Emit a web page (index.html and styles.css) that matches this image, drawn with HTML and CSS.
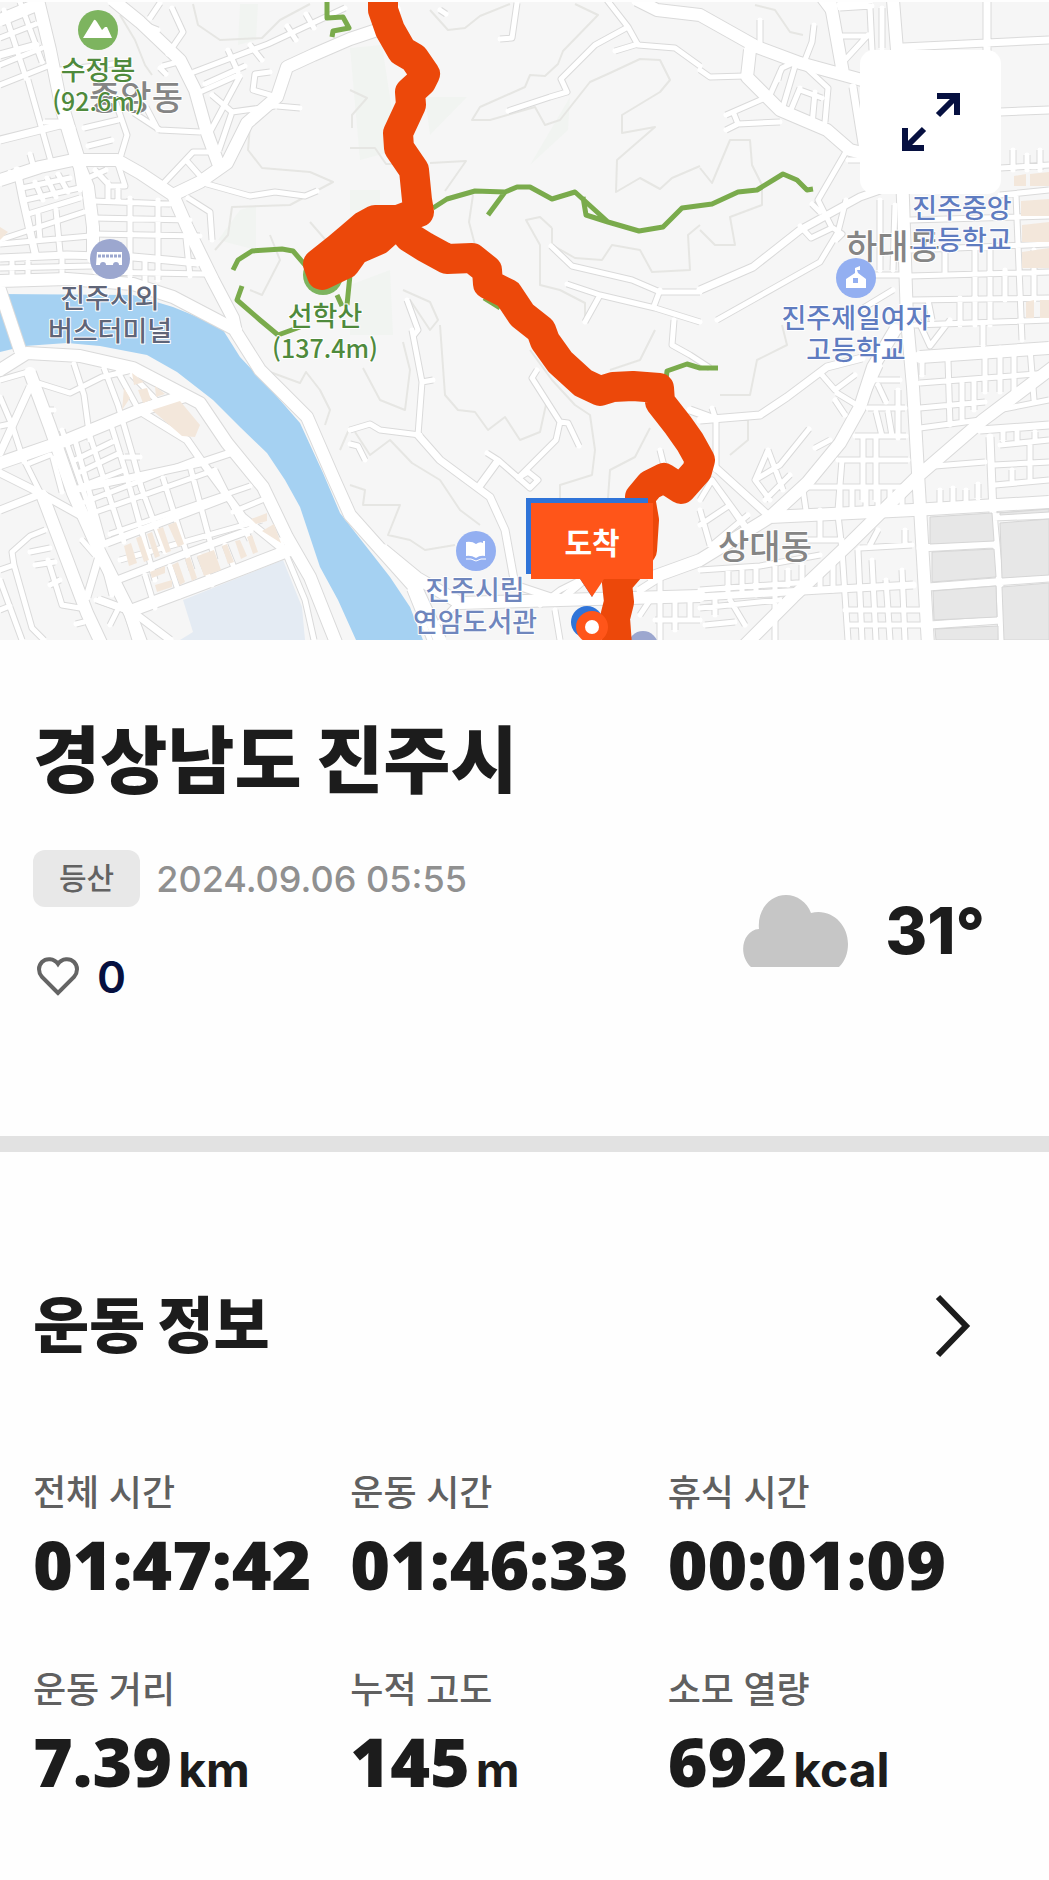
FILE: index.html
```html
<!DOCTYPE html>
<html lang="ko">
<head>
<meta charset="utf-8">
<meta name="viewport" content="width=device-width, initial-scale=1">
<title>경상남도 진주시</title>
<link rel="stylesheet" href="styles.css">
</head>
<body>
<main class="page">
  <section class="map" aria-label="등산 경로 지도">
    <svg class="map-canvas" viewBox="0 2 1049 638" role="img" aria-label="진주시 지도">
      <defs>
        <g id="minor">
          <path d="M0 38L36 24M0 85L48 66M4 10L26 78M20 2L42 62M0 65L42 48M28 80L52 165M45 122H66M68 112L82 158M60 70L130 62M84 128L118 120M88 146L112 140M115 100L127 135L121 155M30 154L34 168M10 172V180"/>
          <path d="M150 18L160 3M143 24L158 30M172 8L183 32L168 54M163 66L178 62M160 68L166 74"/>
          <path d="M194 72L268 44L345 8M205 84L245 66M228 50L238 72M250 45L262 60M287 26L296 40M306 14L314 28M200 92L236 76M270 72L255 74L253 90L277 97M211 130L240 76M212 95L232 112L275 106M232 112L219 150M277 106L300 108"/>
          <path d="M162 185L193 152L212 152M186 160L202 178M134 113L160 130L200 132M146 107L158 130M207 184L250 196L275 192L305 196L317 191M188 198L210 212L212 240"/>
          <path d="M22 188L70 178M25 200L84 187M28 214L80 198M0 240L84 212M35 182L43 200M47 178L56 197M58 174L68 192M76 165L80 190M95 170L110 186H125L118 164M108 182V200M88 178L106 170"/>
          <path d="M93 201L170 204M94 218L190 220M94 234L200 236M0 244L90 236M0 268L92 266M95 272L205 274M130 198V276M158 200V280M38 214L40 240M56 210L60 252M12 262V278M28 262V278M62 260V280M186 238L190 276M145 258V282M118 190V200"/>
          <path d="M0 380L28 372M0 397L12 425L24 462M38 383L70 393L102 377L128 371M74 364L84 395L90 440M104 368L118 405L134 460L142 490M118 372L136 405M132 375L160 404M48 410H54M0 426L10 424"/>
          <path d="M62 430L90 510L112 595M75 440L104 545M90 436L124 542M112 428L125 470L155 580M30 463L50 455M20 452L40 492M53 458L62 492M75 460L112 442M78 473L120 453M82 486L124 470M85 502L200 458M90 514L215 470M110 534L250 486M120 560L262 520M140 484L165 552M163 478L192 570M190 466L215 560M215 470L250 540M233 512L262 500M120 590L135 640M145 575L155 608M170 566L180 596M200 556L212 585M225 545L235 570M140 457H125"/>
          <path d="M0 570L14 565L32 628L44 640M14 565L12 552L30 536L45 530M30 552L50 548M35 565L55 562M48 560L62 605L80 608M0 580L22 640M0 610L10 606M50 585L60 580M76 624L84 622M82 540L95 555M120 605L110 625M96 600L130 612M280 540L305 600L314 640"/>
          <path d="M440 10L446 14M517 3L512 38L500 39M607 0L628 27L638 45L675 48L700 66M628 27L595 45L561 79L567 92L550 97L508 111M615 51L638 44M551 246L572 266L632 280L660 292L700 292M567 284L600 295L655 308L700 322M600 295L585 322M660 290L654 306M407 300L418 330L414 335M674 320L672 345L690 355L710 368"/>
          <path d="M350 430L370 424L380 430L420 435M418 435L422 382L412 330M422 382L433 380M350 444L358 446L365 460M480 485L498 460L487 453M498 460L530 488L538 480L528 472L518 478L556 440L560 422L532 378L537 370M560 422L568 423L579 446M665 470L660 450"/>
          <path d="M700 70L710 77L745 76M726 115L765 98M726 130L738 124L780 122M738 124L734 114M770 95L782 68L795 62M780 72L778 80M795 66L782 110M800 62L828 88L825 122M800 88L790 112M815 92L812 125M800 90L822 98M760 48V20M805 60L812 42L814 25M820 0L835 20"/>
          <path d="M835 36H870M870 8L872 50M840 8L872 6M845 60L868 35M882 8V48M847 150L818 200L832 228L811 238L800 226M862 160H848M833 228L842 234L836 240M820 212L812 204M846 200L838 232L820 262L717 320M880 200V270M895 205L893 270M870 275H904M860 310L893 290"/>
          <path d="M1000 168L1049 165M1000 195L1049 190M910 220L1049 216M912 250L1049 244M910 276L1049 272M912 300L1049 298M915 325L1049 320M1013 150V170M1027 155V170M1040 150V170M1016 195L1022 340M945 250V275M975 250V325M990 250V325M1005 270V300M928 300L932 320M960 298V325M1034 250V300M918 320L930 346L950 320M983 325V345"/>
          <path d="M920 383L1049 373M920 408L985 402M920 428L980 420M922 375V360M948 360L950 425M962 382V420M974 382V410M985 350V392M1000 348V392M1014 348V392M1030 348L1034 400M998 410L1049 400M1000 445L1049 440M994 465L1049 462M995 485L1049 480M1030 445V480M1012 470V480M1003 432V440M1017 432V440M1035 432V440M935 466L985 462M940 502V490M953 502V488M966 502V490M978 498V484M998 516L1049 512"/>
          <path d="M870 380H900M868 408H905M855 436H906M838 460H908M808 487H910M880 366L868 392M878 385L886 402M876 412L882 436M888 412L892 436M898 390V438M863 436V500M876 436V500M842 460L838 510M840 490V510M852 490V510M866 490V510M878 490V510M890 490V510M902 490V510M803 490L806 510M820 510V540M838 515L842 550M808 540H842M860 548L912 545M870 545L878 530M905 545V530"/>
          <path d="M700 570L760 566L820 555M700 608L780 600M705 625L735 622M700 590L810 582M728 572V595M742 570V595M756 568V595M775 566V640M788 570V585M802 565V582M842 550L848 640M858 550L862 640M872 560L876 640M886 580L890 640M902 570L905 640M820 572V590M833 560V590M730 600L745 625M715 600V615M845 610H920M847 625H925M770 500L755 480L768 450M755 480L780 465L809 429M768 450L783 490M765 500L790 475M700 500L712 480L745 525M712 480L750 535M700 525L730 505M712 545L748 515M700 510L710 545M716 420V470M712 408L716 420M835 400L845 415M822 375L835 390L855 375M837 393L860 407M815 448L830 440"/>
          <path d="M555 610L560 640M640 615L650 600M660 580V640M675 595V630M690 595V620M655 620H700M540 605L560 590L580 580M410 590L430 640M455 606L440 622"/>
        </g>
        <g id="street">
          <path d="M17 170L23 200L35 253M0 258L67 255L133 257L167 260L197 263M30 387L0 453M0 473L40 493L83 517M0 510L43 493M100 553L87 597M117 580L187 553L250 530M107 543L160 523L225 498M73 490L200 463L230 453M143 413L187 440L203 463L243 517L280 547M100 600L133 612L170 640"/>
          <path d="M700 420L760 415L787 397L827 367L862 358M716 468L770 517M700 290L753 267L800 230L860 197L880 190M903 47L1049 40M987 0V50L990 110M1000 112L1049 110M700 597L820 590L913 585M920 548L993 544M928 587L1049 578M930 625L1000 620M990 437L993 513L1000 587L1002 640M993 517L1049 515M980 430L1049 425M853 87L863 150L880 190M870 0L840 5M640 590L662 576"/>
          <path d="M418 435L440 460L490 497L505 530L515 585L560 600M478 488L497 462M0 55L36 45M0 140L60 125L72 128M690 410L712 418M450 600L500 602L590 598M560 600L590 575"/>
        </g>
        <g id="avenue">
          <path d="M113 0L140 22L180 60L195 90L207 133L218 163M0 180L40 167L73 160L117 160L140 173L173 195M395 10L377 30L350 39L313 55L287 67L277 97L247 123L227 163L200 182L173 195L187 227L213 280L233 318L236 332L260 370L307 417L333 477L350 515L383 552L417 590L440 640M383 550L417 578L460 603L700 596"/>
          <path d="M0 20L34 6M38 0L50 50L62 110L77 160L88 187L93 227V258M0 281L67 279L133 284L173 297L236 330M0 290L20 350"/>
          <path d="M0 370L27 353L80 356L133 368L200 403L227 443L263 487L287 537L310 577L337 645M0 463L67 440L140 410L185 396M30 373L50 427L73 493L100 553L130 613L142 645M43 497L67 560L87 613L102 645M133 610L213 580L290 550"/>
          <path d="M637 0L657 10L700 15L757 47L800 63L862 80M750 50L747 77L780 110L827 130L850 150L870 155M830 0L843 73M653 577L700 560L770 517L807 483L840 443L860 407L873 367L895 330M770 517L913 510L1049 502M920 357L1049 348"/>
          <path class="trunk" d="M893 0L897 50L903 200L907 320L913 387L920 507L928 645M1060 362L983 420L917 477L850 543L793 597L745 645"/>
        </g>
      </defs>

      <rect class="land" y="0" width="1049" height="640"/>
      <path class="wood" d="M350 48L382 45L398 150L360 160ZM425 97H467L430 135ZM240 4H258L256 40L238 45ZM350 190H380V210H350ZM350 285L390 270L393 335H350ZM240 210L256 205V250L218 240ZM570 97L568 130L530 165Z"/>
      <path class="contour" d="M193 4L198 25L220 40L262 38L280 20L310 4M120 15L135 40L145 65L152 75M250 125L248 150L262 168L310 172L333 182L290 205L232 207L228 235L215 250M350 148H375L386 164H400M350 90L367 98L352 115V128M430 163L466 161L445 191M473 195L469 222L475 245M430 10L448 30L465 28L480 16L510 4M575 4L598 15L563 51L558 64L545 76L530 75L525 87L480 107L472 120H490L535 107L545 125L560 120L590 82L610 73L640 59L660 60L670 80L660 92L622 115V133L655 127L617 160L616 192L640 178L660 189L672 178L700 166M552 228L540 217L526 220L540 245V285L560 290L585 303V320M552 228V245L575 258L602 260L612 245L640 250L652 272L690 270L688 235L700 225"/>
      <path class="contour" d="M700 168L712 183L730 140L750 140L752 165L762 185V205L730 217L735 245L715 245L700 230M755 5L775 10L790 32L803 35M403 290L430 302L438 320L430 330L410 300M363 368L380 400L405 410L410 370L403 342M440 325L445 395L458 410L475 412L488 430L505 417L520 440L540 432L547 400M530 350L552 380L575 405L590 415L595 450L592 475L560 485V498M655 330L640 360L610 370M650 428L635 457L610 470L608 498M355 432L370 455L390 440L412 463L440 480L460 510L480 525M350 485L365 490L363 505L400 505L388 535L410 540L425 550L455 545M270 372L300 383L306 372L320 390L330 410L325 425M350 427L340 450M720 395L750 395L757 360L787 345L782 325M720 420H748V440L730 455M270 235L280 260L262 295L250 290M310 222L330 245"/>
      <path class="river" d="M0 294L133 295L173 307L200 318L223 330L240 357L273 392L300 423L323 473L340 513L390 577L410 607L423 640H356L338 600L320 567L300 507L285 480L267 453L240 427L213 400L177 372L147 355L100 346L67 343L25 346L0 352Z"/>
      <path class="water" d="M183 600L283 560L302 607L305 640H180L193 632Z"/>

      <use href="#minor" class="case case-minor"/>
      <use href="#street" class="case case-street"/>
      <use href="#avenue" class="case case-avenue"/>
      <use href="#minor" class="road road-minor"/>
      <use href="#street" class="road road-street"/>
      <use href="#avenue" class="road road-avenue"/>

      <path class="shop" d="M152 410L180 401L200 425L195 437L182 436ZM132 373L144 382L134 385ZM138 390L147 388L151 400L143 403ZM155 386L165 394L156 397ZM124 388L130 398L122 410ZM124 546L131 543L137 563L129 566ZM136 538L141 536L149 560L144 562ZM147 534L152 532L160 556L155 558ZM157 529L163 527L171 551L166 553ZM168 525L176 522L184 544L178 547ZM197 556L214 550L221 570L204 576ZM172 565L178 562L185 582L180 585ZM185 559L190 557L197 578L192 581ZM222 546L227 544L234 562L228 564ZM235 541L240 540L247 556L241 559ZM247 537L252 535L258 552L253 554ZM251 519L267 513V521L256 524ZM262 531L274 524L281 543ZM150 572L165 566V573L152 578ZM155 585L172 580V587L157 592ZM1021 201L1049 199V216H1021ZM1022 225L1049 222V242H1022ZM1022 252L1049 248V268H1022ZM1014 176L1026 174V186H1014ZM1030 174L1049 172V186H1030ZM1026 302L1034 300V318H1026ZM1040 300H1049V318H1040ZM0 227L8 232L0 240Z"/>
      <path class="works" d="M930 517L992 513L994 541L930 544ZM932 552L994 549L996 577L932 582ZM933 591L996 586L997 617L934 620ZM935 629L998 626V640H936ZM1000 523L1049 519V575L1002 578ZM1002 587L1049 583V640H1004ZM1000 513L1049 509V512L1000 515Z"/>

      <path class="trail" d="M327 0V18L343 17L349 28L333 31L332 37M233 270L238 260L252 251L282 249L293 251L306 266M242 286L237 300L260 320L278 335L300 327M350 275L347 305M337 295L342 306M433 208L447 199L475 191L505 192L517 187L530 187L552 199L575 192L608 222L639 231L663 227L682 208L712 204L738 192L757 190L783 174L797 180L807 190L813 189M505 192L488 215M583 197L586 215L608 222M484 298L500 308M666 380L667 371L687 364L700 368H718"/>
      <circle class="pin-peak" cx="323" cy="275" r="20"/>
      <circle class="pin-bus" cx="643" cy="646" r="15"/>

      <path class="route" d="M383 0V10L390 30L402 51L414 58L425 74L421 82L410 92L411 105L398 133L399 148L414 170L417 200L419 212L398 220L375 220L364 226L350 238L338 248L318 264L322 275L345 264L355 250L378 240L398 222L409 237L425 247L447 259L472 258L487 270L488 284L508 294L522 315L541 330L545 341L560 362L583 383L600 391L613 387L633 386L659 388L660 402L678 425L690 442L700 460L697 471L681 489L664 478L650 485L640 497L644 520L642 550L630 568L617 583L619 602L615 618L617 645"/>

      <path class="flag-shadow" d="M526 498H648V574H526ZM577 574L592 597L600 574Z"/>
      <circle class="flag-shadow" cx="587" cy="622" r="16"/>
      <path class="flag" d="M531 503H653V579H604L592 597L580 579H531Z"/>
      <circle class="flag" cx="592" cy="627" r="16"/>
      <circle class="glyph" cx="592" cy="627" r="7"/>
      <text class="flag-text" x="592" y="554">도착</text>

      <g class="label district">
        <text x="136" y="110">중앙동</text>
        <text x="893" y="259">하대동</text>
        <text x="765" y="559">상대동</text>
      </g>
      <g class="label peak">
        <text x="98" y="80">수정봉</text>
        <text class="height" x="98" y="111">(92.6m)</text>
        <text x="325" y="326">선학산</text>
        <text class="height" x="325" y="358">(137.4m)</text>
      </g>
      <g class="label terminal">
        <text x="110" y="308">진주시외</text>
        <text x="110" y="341">버스터미널</text>
      </g>
      <g class="label school">
        <text x="962" y="218">진주중앙</text>
        <text x="962" y="250">고등학교</text>
        <text x="856" y="328">진주제일여자</text>
        <text x="856" y="360">고등학교</text>
      </g>
      <g class="label library">
        <text x="475" y="600">진주시립</text>
        <text x="475" y="632">연암도서관</text>
      </g>

      <circle class="pin-peak" cx="98" cy="30" r="20"/>
      <path class="glyph" d="M83 38L94 20Q95 19 97 22L102 30L105 27H107L112 38Z"/>
      <circle class="pin-bus" cx="110" cy="259" r="20"/>
      <path class="glyph" d="M97 252H122V265H119A3 3 0 0 0 113 265H106A3 3 0 0 0 100 265H96Z"/>
      <path class="bus-windows" d="M98 256H121"/>
      <circle class="pin-place" cx="856" cy="278" r="20"/>
      <path class="glyph" d="M855 268L860 266V270L857 270L858 273L866 279V288H846V279L855 273Z"/>
      <rect class="pin-place" x="853" y="278" width="5" height="5"/>
      <circle class="pin-place" cx="476" cy="551" r="20"/>
      <path class="glyph" d="M466 542Q472 541 476 544Q480 541 483 543V541H485V556Q480 555 476 558Q471 555 466 556Z"/>
      <path class="book-edge" d="M466 559Q471 558 476 561Q481 558 486 559"/>
    </svg>
    <button class="expand" type="button" aria-label="지도 확대">
      <svg viewBox="0 0 58 58" width="58" height="58" aria-hidden="true">
        <path d="M35 3H55V22M55 3L36 22M3 35V55H22M3 55L22 36"/>
      </svg>
    </button>
  </section>

  <section class="summary">
    <h1>경상남도 진주시</h1>
    <div class="summary-row">
      <div class="meta">
        <div class="meta-line">
          <span class="chip">등산</span>
          <time datetime="2024-09-06T05:55">2024.09.06 05:55</time>
        </div>
        <button class="like" type="button" aria-label="좋아요 0">
          <svg viewBox="0 0 42 40" width="42" height="40" aria-hidden="true">
            <path d="M21 36L5 20C1 15 1 9 5 5C9 1 17 1 21 7C25 1 33 1 37 5C41 9 41 15 37 20Z"/>
          </svg>
          <span>0</span>
        </button>
      </div>
      <div class="weather">
        <svg viewBox="0 0 106 72" width="106" height="72" role="img" aria-label="흐림">
          <path d="M8 72C-6 59 0 35 16 34C14 15 27 0 43 0C54 0 64 7 68 18C88 13 105 29 105 49C105 58 102 66 96 72Z"/>
        </svg>
        <strong>31°</strong>
      </div>
    </div>
  </section>

  <section class="workout">
    <header class="workout-head">
      <h2>운동 정보</h2>
      <a href="#stats" aria-label="운동 정보 자세히 보기">
        <svg viewBox="0 0 36 64" width="36" height="64" aria-hidden="true">
          <path d="M3 3L31 32L3 61"/>
        </svg>
      </a>
    </header>
    <dl class="stats" id="stats">
      <div><dt>전체 시간</dt><dd>01:47:42</dd></div>
      <div><dt>운동 시간</dt><dd>01:46:33</dd></div>
      <div><dt>휴식 시간</dt><dd>00:01:09</dd></div>
      <div><dt>운동 거리</dt><dd>7.39<small>km</small></dd></div>
      <div><dt>누적 고도</dt><dd>145<small>m</small></dd></div>
      <div><dt>소모 열량</dt><dd>692<small>kcal</small></dd></div>
    </dl>
  </section>
</main>
</body>
</html>
```
FILE: styles.css
```css
* {
  box-sizing: border-box;
}

body {
  margin: 0;
  background: #fefefe;
  color: #1c1c1c;
  font-family: Inter, "Noto Sans CJK KR", sans-serif;
}

h1,
h2,
dl,
dd {
  margin: 0;
}

button {
  border: 0;
  padding: 0;
  background: none;
  font: inherit;
  cursor: pointer;
}

svg {
  display: block;
}

/* Map */
.map {
  position: relative;
  padding-top: 2px;
}

.map-canvas {
  width: 100%;
  height: auto;
}

.land { fill: #f6f6f6; }
.wood { fill: #f1f4f1; }
.river { fill: #a5d1f2; }
.water { fill: #e4ebf3; }
.shop { fill: #f3e7db; }
.works { fill: #e7e7e7; stroke: #d6d6d6; }

.contour {
  fill: none;
  stroke: #e6e6e3;
  stroke-width: 2;
  stroke-linejoin: round;
}

.case,
.road {
  fill: none;
  stroke-linejoin: round;
}

.case { stroke: #dadada; }
.road { stroke: #ffffff; stroke-linecap: round; }
.case-minor { stroke-width: 7; }
.road-minor { stroke-width: 5; }
.case-street { stroke-width: 9; }
.road-street { stroke-width: 7; }
.case-avenue { stroke-width: 14; }
.road-avenue { stroke-width: 12; }

.trail {
  fill: none;
  stroke: #7aab4c;
  stroke-width: 5;
  stroke-linejoin: round;
}

.route {
  fill: none;
  stroke: #ec480a;
  stroke-width: 30;
  stroke-linejoin: round;
  stroke-linecap: round;
}

.flag { fill: #ff5519; }
.flag-shadow { fill: #2f74d8; }
.glyph { fill: #ffffff; }
.pin-peak { fill: #7db45f; }
.pin-bus { fill: #9ca7cf; }
.pin-place { fill: #93aff1; }

.bus-windows {
  stroke: #9ca7cf;
  stroke-width: 3;
  stroke-dasharray: 3 1;
}

.book-edge {
  fill: none;
  stroke: #ffffff;
  stroke-width: 1;
}

.label,
.flag-text {
  font-family: "Noto Sans CJK KR", sans-serif;
  font-size: 27px;
  font-weight: 500;
  text-anchor: middle;
}

.label {
  stroke: #ffffff;
  stroke-width: 2;
  stroke-linejoin: round;
  paint-order: stroke;
}

.flag-text { fill: #ffffff; font-size: 30px; font-weight: 700; }
.district { fill: #858585; font-size: 34px; }
.peak { fill: #4f8a3c; }
.height { font-size: 25px; }
.terminal { fill: #5f6578; }
.school { fill: #5f7cc0; }
.library { fill: #6f86bd; }

.expand {
  position: absolute;
  top: 50px;
  right: 48px;
  display: grid;
  place-items: center;
  width: 141px;
  height: 144px;
  border-radius: 14px;
  background: #ffffff;
}

.expand path {
  fill: none;
  stroke: #061040;
  stroke-width: 6;
}

/* Summary */
.summary {
  padding: 73px 64px 132px 33px;
  border-bottom: 16px solid #e2e2e2;
}

h1 {
  font-size: 73px;
  font-weight: 900;
  line-height: 96px;
}

.summary-row {
  display: flex;
  align-items: center;
  justify-content: space-between;
  margin-top: 41px;
}

.meta {
  display: grid;
  gap: 43px;
}

.meta-line {
  display: flex;
  align-items: center;
  gap: 16px;
}

.chip {
  padding: 0 26px;
  border-radius: 12px;
  background: #e8e8e8;
  color: #626262;
  font-size: 30px;
  font-weight: 500;
  line-height: 57px;
}

time {
  color: #909090;
  font-size: 36px;
  font-weight: 500;
}

.like {
  display: flex;
  align-items: center;
  justify-self: start;
  gap: 18px;
  padding-left: 4px;
  color: #061040;
  font-size: 44px;
  font-weight: 600;
  line-height: 54px;
}

.like path {
  fill: none;
  stroke: #646464;
  stroke-width: 4;
}

.weather {
  display: flex;
  align-items: center;
  gap: 36px;
  padding-top: 8px;
}

.weather path {
  fill: #c6c6c6;
}

.weather strong {
  font-size: 64px;
  font-weight: 800;
  line-height: 72px;
}

/* Workout */
.workout {
  padding: 132px 64px 62px 33px;
}

.workout-head {
  display: flex;
  align-items: center;
  justify-content: space-between;
  padding-right: 14px;
}

h2 {
  font-size: 61px;
  font-weight: 900;
  line-height: 84px;
}

.workout-head path {
  fill: none;
  stroke: #1c1c1c;
  stroke-width: 6;
}

.stats {
  display: grid;
  grid-template-columns: repeat(3, 1fr);
  row-gap: 56px;
  margin-top: 100px;
}

dt {
  color: #606060;
  font-size: 36px;
  font-weight: 500;
  line-height: 50px;
}

dd {
  font-family: "Open Sans", "Noto Sans", sans-serif;
  font-size: 68px;
  font-weight: 800;
  line-height: 91px;
}

small {
  margin-left: 6px;
  font-family: Inter, sans-serif;
  font-size: 48px;
  font-weight: 700;
}
```
